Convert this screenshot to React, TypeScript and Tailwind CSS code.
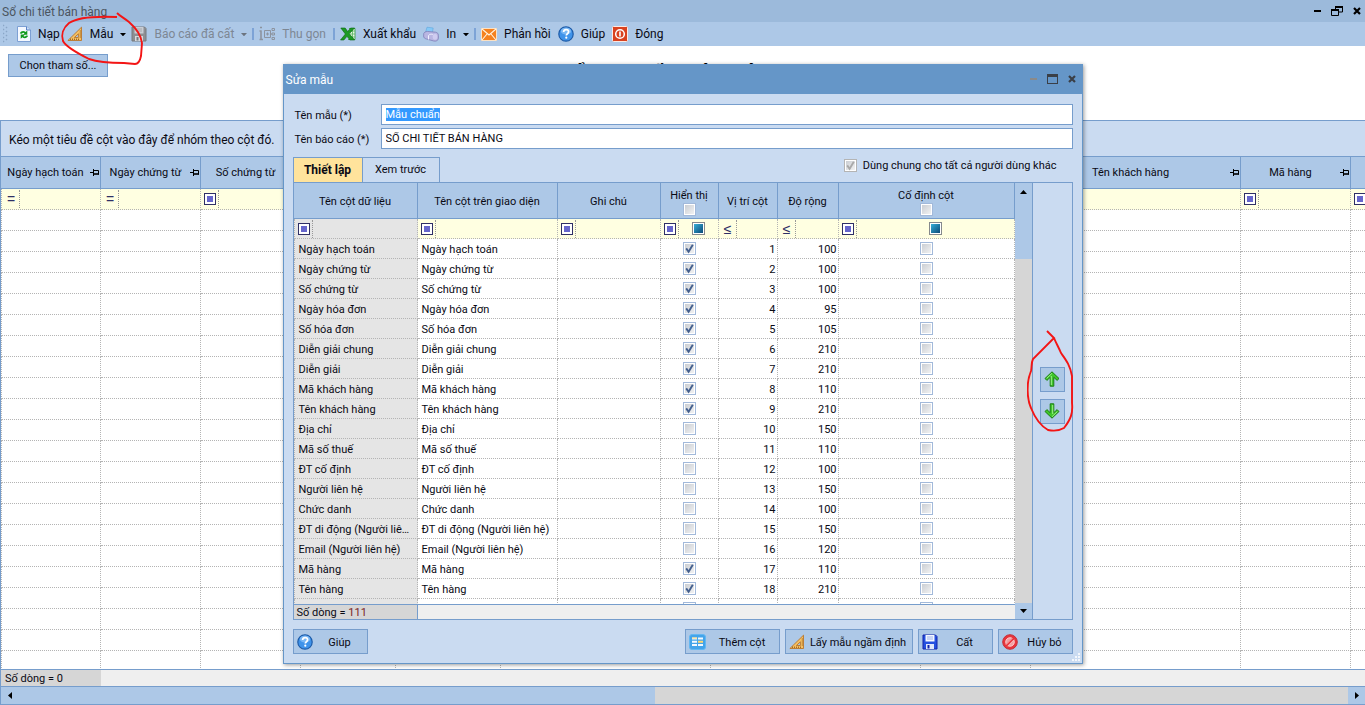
import { useEffect, useRef, type ReactNode } from "react";

/* ---------- icons ---------- */

function RefreshIcon() {
  return (
    <svg width="14" height="16" viewBox="0 0 14 16" aria-hidden="true">
      <path d="M.5.5h9l4 3.500v11.500H.5z" fill="#f4f8ff" stroke="#7da0d4" />
      <path d="M9.500.5v3.500h4" fill="#cfe0f8" stroke="#5b83c4" />
      <path d="M2.800 7.500c1.200-2.800 4.200-3 5.700-1.400L10.300 4.500v4.300H6l1.500-1.400c-1-.9-2-.7-2.500.4z" fill="#0f9a1c" />
      <path d="M11.200 9.800c-1.200 2.800-4.200 3-5.700 1.400L3.700 12.800V8.500H8L6.500 9.900c1 .9 2 .7 2.500-.4z" fill="#0f9a1c" />
    </svg>
  );
}

function RulerIcon() {
  return (
    <svg width="16" height="16" viewBox="0 0 16 16" className="shrink-0" aria-hidden="true">
      <path fillRule="evenodd" d="M14.500 1.200v13.300H.9zM11.400 7.800v3.700H7.400z" fill="#f5c063" stroke="#b9762a" strokeWidth=".9" />
      <path d="M3.500 14v-1.500M5.500 14v-1.500M7.500 14v-1.500M9.500 14v-1.500M11.500 14v-1.500M14 5h-1.300M14 7h-1.300M14 9h-1.300M14 11h-1.300" stroke="#8e5515" strokeWidth=".8" />
    </svg>
  );
}

function DisketteIcon({ muted = false }: { muted?: boolean }) {
  const body = muted ? "#8d8f93" : "#2450e0";
  const edge = muted ? "#77797d" : "#1222a8";
  return (
    <svg width="16" height="16" viewBox="0 0 16 16" aria-hidden="true">
      <path d="M1 1h12.500L15 2.500V15H1z" fill={body} stroke={edge} />
      <path d="M3.500 1h9v6.500h-9z" fill={muted ? "#c9cdd4" : "#f4f7ff"} />
      <path d="M5 3h6M5 5h6" stroke={muted ? "#a5a8ad" : "#9db2ea"} />
      <path d="M4 10h8v5H4z" fill={muted ? "#d7dade" : "#dfe7fb"} />
      <path d="M5.500 11h2v3.500h-2z" fill={edge} />
    </svg>
  );
}

function CollapseIcon() {
  return (
    <svg width="16" height="16" viewBox="0 0 16 16" fill="none" stroke="#8c939e" aria-hidden="true">
      <path d="M1 1.500h2M2 4.500v9M.5 5h2M.5 13.500h3.500" strokeWidth="1.600" />
      <path d="M5.500 4.500h6v7h-6zM7 8h3M8.500 6.500v3M12 8h1" />
      <path d="M13 2.500h2.500v2H13zM13 7h2.500v2H13zM13 11.500h2.500v2H13z" />
    </svg>
  );
}

function ExcelIcon() {
  return (
    <svg width="16" height="14" viewBox="0 0 16 14" aria-hidden="true">
      <path d="M9 1.500h6v11H8" fill="#e9f7e6" stroke="#2f9a3b" strokeWidth=".8" />
      <path d="M10 4h5M10 7h5M10 10h5M12.500 2v10" stroke="#57b560" strokeWidth=".8" />
      <path d="M.8 1h4.400l2.500 3.600L10.600 1h4L9.300 6.800l5.400 6.200H9.800L7 9.300 3.900 13H.5l4.900-6z" fill="#1c9a25" stroke="#0c6413" strokeWidth=".6" />
    </svg>
  );
}

function PrinterIcon() {
  return (
    <svg width="16" height="16" viewBox="0 0 16 16" aria-hidden="true">
      <path d="M2.500 6.500L4 1.200l6.200.8-.9 5z" fill="#86c9f7" stroke="#5fa6dc" strokeWidth=".6" />
      <path d="M.8 7.200C2 5.500 4 5.200 6 5.600l6.500.6c2 .3 3 1.600 2.900 3.300v3c-.3 2-2.300 3-4.600 2.500L3.500 13C1.500 12.500.6 11.500.6 10z" fill="#b9b6e2" stroke="#7f7db8" strokeWidth=".8" />
      <path d="M5.500 9.500c1-1.300 2.600-1.500 4.300-1.100M5.500 9.500v4" stroke="#f1f0ff" fill="none" />
      <ellipse cx="12" cy="10.800" rx="2.300" ry="3" fill="#cfccf0" />
    </svg>
  );
}

function MailIcon() {
  return (
    <svg width="16" height="13" viewBox="0 0 16 13" aria-hidden="true">
      <path d="M.5.5h15v12H.5z" fill="#f5811f" stroke="#fbe1c3" />
      <path d="M1 1l7 6 7-6M1 12l5-6M15 12l-5-6" fill="none" stroke="#fff3e0" strokeWidth="1.100" />
    </svg>
  );
}

function HelpIcon() {
  return (
    <svg width="16" height="16" viewBox="0 0 16 16" aria-hidden="true">
      <circle cx="8" cy="8" r="7.200" fill="#3f93ea" stroke="#1d5ba8" strokeWidth="1.200" />
      <ellipse cx="8" cy="5" rx="5.200" ry="3.600" fill="#8fc4f8" opacity=".75" />
      <path d="M5.600 6c.1-1.500 1.100-2.300 2.500-2.300 1.500 0 2.500.8 2.500 2.100 0 1.900-2.200 1.900-2.300 3.700" fill="none" stroke="#fff" strokeWidth="1.700" />
      <circle cx="8.300" cy="11.700" r="1.100" fill="#fff" />
    </svg>
  );
}

function PowerIcon() {
  return (
    <svg width="16" height="16" viewBox="0 0 16 16" aria-hidden="true">
      <rect x=".5" y=".5" width="15" height="15" rx="1" fill="#d9421f" stroke="#fbe9e3" />
      <circle cx="8" cy="8" r="4.300" fill="none" stroke="#fff" strokeWidth="1.500" />
      <path d="M8 5.500v5" stroke="#fff" strokeWidth="1.600" />
    </svg>
  );
}

function AddColumnIcon() {
  return (
    <svg width="17" height="16" viewBox="0 0 17 16" aria-hidden="true">
      <rect x=".5" y=".5" width="16" height="15" rx="2.500" fill="#43a4ea" stroke="#63b7f2" />
      <path d="M3 3.500h5v2H3zM3 6.800h5v2H3zM3 10.100h5v2H3z" fill="#f3f9ff" />
      <path d="M9 3.500h5v2H9zM9 10.100h5v2H9z" fill="#f3f9ff" />
      <path d="M9 6.800h5v2H9zM3 3.500h5v1H3z" fill="#ffd873" />
    </svg>
  );
}

function CancelIcon() {
  return (
    <svg width="16" height="16" viewBox="0 0 16 16" aria-hidden="true">
      <circle cx="8" cy="8" r="7.300" fill="#e8343c" stroke="#c3323a" />
      <circle cx="8" cy="8" r="4.300" fill="#f3a0a3" stroke="#fde4e4" strokeWidth=".8" />
      <path d="M4.500 11.500l7-7" stroke="#e8343c" strokeWidth="2.600" />
      <path d="M3.800 10.800l6.600-6.600M5.500 12.300l6.600-6.600" stroke="#fde4e4" strokeWidth=".7" />
    </svg>
  );
}

function ArrowIcon({ down = false }: { down?: boolean }) {
  return (
    <svg width="16" height="16" viewBox="0 0 16 16" className={down ? "rotate-180" : ""} aria-hidden="true">
      <path d="M8 .8l7 6.700-1.900 1.900L9.800 6.300v8.900H6.200V6.300L2.900 9.400 1 7.500z" fill="#3fc62b" stroke="#1a7d12" strokeLinejoin="round" />
      <path d="M8 2.300L2.700 7.400M7.300 5v9" stroke="#9ff08c" fill="none" />
    </svg>
  );
}

function PinIcon() {
  return (
    <svg width="10" height="9" viewBox="0 0 10 9" className="shrink-0" aria-hidden="true">
      <path d="M0 4.500h4M3.500 1v7M3.500 2.500h5v4" fill="none" stroke="#000" />
      <path d="M3 6h6" stroke="#000" strokeWidth="1.600" />
    </svg>
  );
}

function Caret({ muted = false }: { muted?: boolean }) {
  return (
    <svg width="6" height="3" viewBox="0 0 6 3" aria-hidden="true">
      <path d="M0 0h6L3 3.300z" fill={muted ? "#6c747f" : "#000"} />
    </svg>
  );
}

function CloseIcon({ color }: { color: string }) {
  return (
    <svg width="8" height="8" viewBox="0 0 8 8" aria-hidden="true">
      <path d="M1 1l6 6M7 1L1 7" stroke={color} strokeWidth="2.200" />
    </svg>
  );
}

/* ---------- small controls ---------- */

function ToolButton({ icon, label, caret, muted }: { icon: ReactNode; label: string; caret?: boolean; muted?: boolean }) {
  return (
    <button
      type="button"
      disabled={muted}
      className={`flex h-full shrink-0 items-center gap-[7px] ${caret ? "" : "pr-0.5"} ${muted ? "text-[#7d8794]" : "text-[#0a0a14]"}`}
    >
      {icon}
      <span>{label}</span>
      {caret && <Caret muted={muted} />}
    </button>
  );
}

function ToolSeparator() {
  return <span className="h-3 w-0.5 shrink-0 bg-[#7da3d6]" />;
}

function PushButton({ icon, label, width }: { icon?: ReactNode; label: string; width: string }) {
  return (
    <button type="button" className={`flex h-[25px] items-center border border-[#769dcc] bg-[#adc8e7] pl-[3px] ${width}`}>
      {icon}
      <span className="flex-1 pt-0.5 text-center">{label}</span>
    </button>
  );
}

function Check({ id, label, checked = false, disabled = false }: { id?: string; label?: string; checked?: boolean; disabled?: boolean }) {
  return (
    <span className="relative block size-[13px] shrink-0">
      <input
        id={id}
        type="checkbox"
        aria-label={label}
        defaultChecked={checked}
        disabled={disabled}
        className={`peer block size-[13px] appearance-none border bg-linear-to-br from-[#c6cad0] to-[#f6f6f6] shadow-[inset_0_0_0_1px_#fff] ${disabled ? "border-[#b4b4b4]" : "border-[#a2b9da]"}`}
      />
      <svg viewBox="0 0 13 13" className="pointer-events-none absolute inset-0 hidden size-[13px] peer-checked:block" aria-hidden="true">
        <path d="M3.200 6.400l2.400 3.300L9.800 2.800" fill="none" stroke={disabled ? "#a9a9a9" : "#44608f"} strokeWidth="1.900" />
      </svg>
    </span>
  );
}

function TriState() {
  return (
    <button type="button" aria-label="Lọc" className="block size-[13px] border border-[#85898c] bg-white p-px">
      <span className="block size-full bg-linear-to-br from-[#38b0d8] to-[#0c4a78]" />
    </button>
  );
}

function FilterMark({ kind }: { kind: string }) {
  return (
    <button type="button" aria-label="Điều kiện lọc" className="flex h-[18px] w-[18px] shrink-0 items-center justify-center border-r border-dotted border-[#999] pl-px text-[#2f2f66]">
      {kind === "box" ? (
        <span className="flex size-3 items-center justify-center border border-[#2f2f66] bg-white">
          <span className="size-1.5 bg-[#6666cc]" />
        </span>
      ) : (
        <span className="font-['Liberation_Sans',Arial,sans-serif] text-sm leading-4">{kind}</span>
      )}
    </button>
  );
}

/* ---------- report grid ---------- */

const reportColumns = [
  { id: "posted", label: "Ngày hạch toán", filter: "=", width: "w-[100px]" },
  { id: "issued", label: "Ngày chứng từ", filter: "=", width: "w-[100px]" },
  { id: "voucher", label: "Số chứng từ", filter: "box", width: "w-[100px]" },
  { id: "invoiceDate", label: "", filter: "=", width: "w-[95px]" },
  { id: "invoiceNo", label: "", filter: "box", width: "w-[105px]" },
  { id: "summary", label: "", filter: "box", width: "w-[210px]" },
  { id: "note", label: "", filter: "box", width: "w-[210px]" },
  { id: "customerCode", label: "", filter: "box", width: "w-[110px]" },
  { id: "customerName", label: "Tên khách hàng", filter: "box", width: "w-[210px]" },
  { id: "itemCode", label: "Mã hàng", filter: "box", width: "w-[110px]" },
  { id: "itemName", label: "", filter: "box", width: "w-[210px]" },
];

const emptyRows = Array.from({ length: 60 }, (_, i) => i);

function ReportGrid() {
  return (
    <section className="flex min-h-0 flex-1 flex-col border-t border-l border-[#769dcc]">
      <p className="flex h-[35px] shrink-0 items-center bg-[#cadbf1] px-2 pt-0.5 text-[12px]">Kéo một tiêu đề cột vào đây để nhóm theo cột đó.</p>
      <div className="min-h-0 flex-1 overflow-hidden">
        <table className="w-[1460px] table-fixed border-separate border-spacing-0">
          <thead>
            <tr>
              {reportColumns.map((c) => (
                <th key={c.id} scope="col" className={`h-[33px] border-y border-r border-[#769dcc] bg-[#adc8e7] p-0 font-normal ${c.width}`}>
                  <div className="flex items-center">
                    <span className="flex-1 pt-px text-center whitespace-nowrap">{c.label}</span>
                    <PinIcon />
                  </div>
                </th>
              ))}
            </tr>
            <tr>
              {reportColumns.map((c) => (
                <td key={c.id} className="h-[21px] border-r border-b border-dotted border-[#b4b4b4] bg-[#ffffe1] p-0 first:border-l">
                  <FilterMark kind={c.filter} />
                </td>
              ))}
            </tr>
          </thead>
          <tbody>
            {emptyRows.map((r) => (
              <tr key={r}>
                {reportColumns.map((c) => (
                  <td key={c.id} className="h-[21px] border-r border-b border-dotted border-[#b4b4b4] p-0 first:border-l" />
                ))}
              </tr>
            ))}
          </tbody>
        </table>
      </div>
      <div className="flex h-[17px] shrink-0 border-t border-[#769dcc] bg-[#efefef]">
        <span className="flex w-[100px] items-center bg-[#d6d6d6] pt-px pl-1">Số dòng = 0</span>
      </div>
      <div className="flex h-[19px] shrink-0 border-y border-[#769dcc] bg-[#d6d6d6]">
        <button type="button" aria-label="Cuộn trái" className="flex w-[17px] items-center justify-center bg-[#adc8e7]">
          <svg width="4" height="7" viewBox="0 0 4 7" aria-hidden="true"><path d="M4 0v7L0 3.500z" /></svg>
        </button>
        <span className="w-7/15 bg-[#adc8e7]" />
        <span className="flex-1" />
        <button type="button" aria-label="Cuộn phải" className="flex w-[17px] items-center justify-center bg-[#adc8e7]">
          <svg width="4" height="7" viewBox="0 0 4 7" aria-hidden="true"><path d="M0 0v7l4-3.500z" /></svg>
        </button>
      </div>
    </section>
  );
}

/* ---------- template dialog ---------- */

type Field = { name: string; shown: boolean; order?: number; size?: number };

const fields: Field[] = [
  { name: "Ngày hạch toán", shown: true, order: 1, size: 100 },
  { name: "Ngày chứng từ", shown: true, order: 2, size: 100 },
  { name: "Số chứng từ", shown: true, order: 3, size: 100 },
  { name: "Ngày hóa đơn", shown: true, order: 4, size: 95 },
  { name: "Số hóa đơn", shown: true, order: 5, size: 105 },
  { name: "Diễn giải chung", shown: true, order: 6, size: 210 },
  { name: "Diễn giải", shown: true, order: 7, size: 210 },
  { name: "Mã khách hàng", shown: true, order: 8, size: 110 },
  { name: "Tên khách hàng", shown: true, order: 9, size: 210 },
  { name: "Địa chỉ", shown: false, order: 10, size: 150 },
  { name: "Mã số thuế", shown: false, order: 11, size: 110 },
  { name: "ĐT cố định", shown: false, order: 12, size: 100 },
  { name: "Người liên hệ", shown: false, order: 13, size: 150 },
  { name: "Chức danh", shown: false, order: 14, size: 100 },
  { name: "ĐT di động (Người liên hệ)", shown: false, order: 15, size: 150 },
  { name: "Email (Người liên hệ)", shown: false, order: 16, size: 120 },
  { name: "Mã hàng", shown: true, order: 17, size: 110 },
  { name: "Tên hàng", shown: true, order: 18, size: 210 },
  { name: "", shown: false },
];

const headCell = "h-[36px] border-r border-b border-[#769dcc] bg-[#adc8e7] font-normal";
const cell = "h-[20px] border-r border-b border-dotted border-[#b4b4b4]";

function FieldTable() {
  return (
    <table className="w-full table-fixed border-separate border-spacing-0">
      <thead>
        <tr>
          <th scope="col" className={`${headCell} w-[124px] px-0 pt-0.5 pb-0`}>Tên cột dữ liệu</th>
          <th scope="col" className={`${headCell} w-[140px] px-0 pt-0.5 pb-0`}>Tên cột trên giao diện</th>
          <th scope="col" className={`${headCell} w-[103px] px-0 pt-0.5 pb-0`}>Ghi chú</th>
          <th scope="col" className={`${headCell} w-[58px] p-0`}>
            <div className="flex flex-col items-center pt-[3px]">Hiển thị<Check label="Hiển thị tất cả" /></div>
          </th>
          <th scope="col" className={`${headCell} w-[59px] px-0 pt-0.5 pb-0`}>Vị trí cột</th>
          <th scope="col" className={`${headCell} w-[61px] px-0 pt-0.5 pb-0`}>Độ rộng</th>
          <th scope="col" className={`${headCell} p-0`}>
            <div className="flex flex-col items-center pt-[3px]">Cố định cột<Check label="Cố định tất cả" /></div>
          </th>
        </tr>
        <tr className="bg-[#ffffe1]">
          <td className={`${cell} border-l bg-[#e5e5e5] p-0`}><FilterMark kind="box" /></td>
          <td className={`${cell} p-0`}><FilterMark kind="box" /></td>
          <td className={`${cell} p-0`}><FilterMark kind="box" /></td>
          <td className={`${cell} p-0`}>
            <div className="flex items-center"><FilterMark kind="box" /><span className="flex flex-1 justify-center"><TriState /></span></div>
          </td>
          <td className={`${cell} p-0`}><FilterMark kind="≤" /></td>
          <td className={`${cell} p-0`}><FilterMark kind="≤" /></td>
          <td className={`${cell} p-0`}>
            <div className="flex items-center"><FilterMark kind="box" /><span className="flex flex-1 justify-center"><TriState /></span></div>
          </td>
        </tr>
      </thead>
      <tbody>
        {fields.map((f) => (
          <tr key={f.name}>
            <td className={`${cell} truncate border-l bg-[#e5e5e5] px-1 pt-0.5 pb-0`}>{f.name}</td>
            <td className={`${cell} truncate px-1 pt-0.5 pb-0`}>{f.name}</td>
            <td className={`${cell} p-0`} />
            <td className={`${cell} p-0`}><div className="flex justify-center"><Check label={`Hiển thị ${f.name}`} checked={f.shown} /></div></td>
            <td className={`${cell} px-px pt-0.5 pb-0 text-right`}>{f.order}</td>
            <td className={`${cell} px-px pt-0.5 pb-0 text-right`}>{f.size}</td>
            <td className={`${cell} p-0`}><div className="flex justify-center"><Check label={`Cố định ${f.name}`} /></div></td>
          </tr>
        ))}
      </tbody>
    </table>
  );
}

function TemplateDialog() {
  const nameRef = useRef<HTMLInputElement>(null);

  useEffect(() => {
    nameRef.current?.focus();
    nameRef.current?.select();
  }, []);

  const inputStyle = "h-[21px] border border-[#769dcc] bg-white px-1 outline-none selection:bg-[#3399ff] selection:text-white";

  return (
    <div role="dialog" aria-label="Sửa mẫu" className="flex w-[800px] flex-col border border-t-0 border-[#6596c8] bg-[#cadbf1] shadow-[1px_1px_4px_rgba(0,0,0,0.4)]">
      <header className="flex h-[30px] items-center bg-[#6596c8] pr-1.5 pl-0.5">
        <h2 className="flex-1 pt-0.5 text-[12px] text-white">Sửa mẫu</h2>
        <div className="flex items-center gap-2.5">
          <button type="button" aria-label="Thu nhỏ" disabled className="h-0.5 w-[7px] bg-[#8a8a8a]" />
          <button type="button" aria-label="Phóng to" className="h-2.5 w-[11px] border border-t-3 border-[#3a3f47]" />
          <button type="button" aria-label="Đóng"><CloseIcon color="#3a3f47" /></button>
        </div>
      </header>

      <div className="flex flex-col px-[9px] pt-2.5 pb-[9px]">
        <div className="grid grid-cols-[88px_1fr] items-center gap-y-[3px]">
          <label htmlFor="template-name" className="pt-0.5 pl-0.5">Tên mẫu (*)</label>
          <input id="template-name" ref={nameRef} defaultValue="Mẫu chuẩn" className={inputStyle} />
          <label htmlFor="report-name" className="pt-0.5 pl-0.5">Tên báo cáo (*)</label>
          <input id="report-name" defaultValue="SỔ CHI TIẾT BÁN HÀNG" className={inputStyle} />
        </div>

        <div className="mt-2 flex h-[25px] justify-between">
          <div role="tablist" className="flex">
            <button type="button" role="tab" aria-selected="true" className="w-[70px] border border-b-0 border-[#769dcc] bg-[#ffe39c] text-[12px] font-bold">Thiết lập</button>
            <button type="button" role="tab" aria-selected="false" className="w-[77px] border border-b-0 border-l-0 border-[#769dcc]">Xem trước</button>
          </div>
          <div className="flex items-center gap-1.5 pr-4 pb-2">
            <Check id="shared" checked disabled />
            <label htmlFor="shared" className="pt-px">Dùng chung cho tất cả người dùng khác</label>
          </div>
        </div>

        <div className="flex h-[438px] border border-[#769dcc]">
          <div className="flex min-w-0 flex-1 flex-col">
            <div className="min-h-0 flex-1 overflow-hidden bg-white"><FieldTable /></div>
            <div className="flex h-[15px] shrink-0 border-t border-[#769dcc] bg-[#efefef]">
              <span className="flex w-[124px] items-center border-r border-[#769dcc] bg-[#d6d6d6] pt-0.5 pl-[3px]">
                Số dòng =&nbsp;<span className="text-[#7a1f1f]">111</span>
              </span>
            </div>
          </div>
          <div className="flex w-[18px] flex-col border-r border-[#769dcc] bg-[#d6d6d6]">
            <button type="button" aria-label="Cuộn lên" className="flex h-[18px] items-center justify-center bg-[#adc8e7]">
              <svg width="7" height="4" viewBox="0 0 7 4" aria-hidden="true"><path d="M0 4h7L3.500 0z" /></svg>
            </button>
            <span className="h-[58px] bg-[#adc8e7]" />
            <span className="flex-1" />
            <button type="button" aria-label="Cuộn xuống" className="flex h-4 items-center justify-center bg-[#adc8e7]">
              <svg width="7" height="4" viewBox="0 0 7 4" aria-hidden="true"><path d="M0 0h7L3.500 4z" /></svg>
            </button>
          </div>
          <div className="flex w-[39px] flex-col items-center justify-center gap-[7px] pb-3">
            <button type="button" aria-label="Chuyển lên" className="flex size-[25px] items-center justify-center border border-[#769dcc] bg-[#adc8e7]"><ArrowIcon /></button>
            <button type="button" aria-label="Chuyển xuống" className="flex size-[25px] items-center justify-center border border-[#769dcc] bg-[#adc8e7]"><ArrowIcon down /></button>
          </div>
        </div>

        <footer className="mt-[9px] flex gap-[5px]">
          <PushButton icon={<HelpIcon />} label="Giúp" width="w-[75px]" />
          <span className="flex-1" />
          <PushButton icon={<AddColumnIcon />} label="Thêm cột" width="w-[95px]" />
          <PushButton icon={<RulerIcon />} label="Lấy mẫu ngầm định" width="w-[128px]" />
          <PushButton icon={<DisketteIcon />} label="Cất" width="w-[75px]" />
          <PushButton icon={<CancelIcon />} label="Hủy bỏ" width="w-[75px]" />
        </footer>
      </div>
      <svg width="9" height="9" viewBox="0 0 9 9" fill="#f4f7fc" className="absolute right-0.5 bottom-0.5" aria-hidden="true">
        <path d="M6 0h2v2H6zM3 3h2v2H3zM6 3h2v2H6zM0 6h2v2H0zM3 6h2v2H3zM6 6h2v2H6z" />
      </svg>
    </div>
  );
}

/* ---------- hand-drawn notes ---------- */

function TemplateNote() {
  return (
    <svg width="90" height="60" viewBox="0 0 90 60" className="pointer-events-none absolute top-[10px] left-[58px]" aria-hidden="true">
      <path d="M59 3C62 6 66 8 71 12C79 19 83 25 84 33L83 46C82 51 80 54 77 54L66 53C54 53 42 53 31 49C19 43 8 37 5 31C3 25 5 18 11 13C20 7 38 6 59 7" fill="none" stroke="#f31515" strokeWidth="1.900" />
    </svg>
  );
}

function ArrowNote() {
  return (
    <svg width="48" height="106" viewBox="0 0 48 106" className="pointer-events-none absolute top-[265px] right-2" aria-hidden="true">
      <path d="M20 2L27 9L6 30C4 34 5 38 4 42C-1 54 0 70 4 79C8 89 14 97 21 101C26 102 32 102 37 99C44 90 46 84 45 74L45 47C43 36 39 31 34 24C32 19 29 14 27 9" fill="none" stroke="#f31515" strokeWidth="1.900" />
    </svg>
  );
}

export default function App() {
  return (
    <main className="relative flex h-screen flex-col overflow-hidden bg-white font-[Roboto,'Noto_Sans',sans-serif] text-[11px] leading-[14px] text-[#0a0a14]">
      <header className="flex h-[22px] shrink-0 items-center bg-[#9cbadb] pr-1 pl-0.5">
        <h1 className="flex-1 pt-0.5 text-[12px] text-[#4b5560]">Sổ chi tiết bán hàng</h1>
        <div className="flex items-center gap-2.5">
          <button type="button" aria-label="Thu nhỏ" className="h-0.5 w-[7px] bg-black" />
          <button type="button" aria-label="Khôi phục">
            <svg width="12" height="10" viewBox="0 0 12 10" fill="none" stroke="#000" aria-hidden="true">
              <path d="M4.500 3V.5h7v5.500H8M.5 3.500h7v6H.5z" />
              <path d="M4 1h8M0 4h8" strokeWidth="2" />
            </svg>
          </button>
          <button type="button" aria-label="Đóng"><CloseIcon color="#000" /></button>
        </div>
      </header>

      <nav className="flex h-6 shrink-0 items-center gap-[5px] bg-[#adc8e7] pl-[3px] text-[12px]">
        <svg width="9" height="20" viewBox="0 0 9 20" fill="#8ba6c6" aria-hidden="true">
          <path d="M0 1h1v1H0zM3 3h1v1H3zM0 5h1v1H0zM3 7h1v1H3zM0 9h1v1H0zM3 11h1v1H3zM0 13h1v1H0zM3 15h1v1H3zM0 17h1v1H0z" stroke="#8ba6c6" strokeWidth=".5" />
        </svg>
        <ToolButton icon={<RefreshIcon />} label="Nạp" />
        <ToolButton icon={<RulerIcon />} label="Mẫu" caret />
        <ToolButton icon={<DisketteIcon muted />} label="Báo cáo đã cất" caret muted />
        <ToolSeparator />
        <ToolButton icon={<CollapseIcon />} label="Thu gọn" muted />
        <ToolSeparator />
        <ToolButton icon={<ExcelIcon />} label="Xuất khẩu" />
        <ToolButton icon={<PrinterIcon />} label="In" caret />
        <ToolSeparator />
        <ToolButton icon={<MailIcon />} label="Phản hồi" />
        <ToolButton icon={<HelpIcon />} label="Giúp" />
        <ToolButton icon={<PowerIcon />} label="Đóng" />
      </nav>

      <section className="grid h-[74px] shrink-0 grid-cols-[1fr_auto_1fr] items-start pt-2 pr-6 pl-2">
        <button type="button" className="h-[23px] w-[100px] border border-[#769dcc] bg-[#adc8e7]">Chọn tham số...</button>
        <p className="pt-2 font-['Liberation_Sans',Arial,sans-serif] text-xl leading-6 font-bold text-black">SỔ CHI TIẾT BÁN HÀNG</p>
      </section>

      <ReportGrid />

      <div className="pointer-events-none absolute inset-x-0 top-16 flex justify-center">
        <div className="pointer-events-auto relative">
          <TemplateDialog />
          <ArrowNote />
        </div>
      </div>
      <TemplateNote />
    </main>
  );
}
